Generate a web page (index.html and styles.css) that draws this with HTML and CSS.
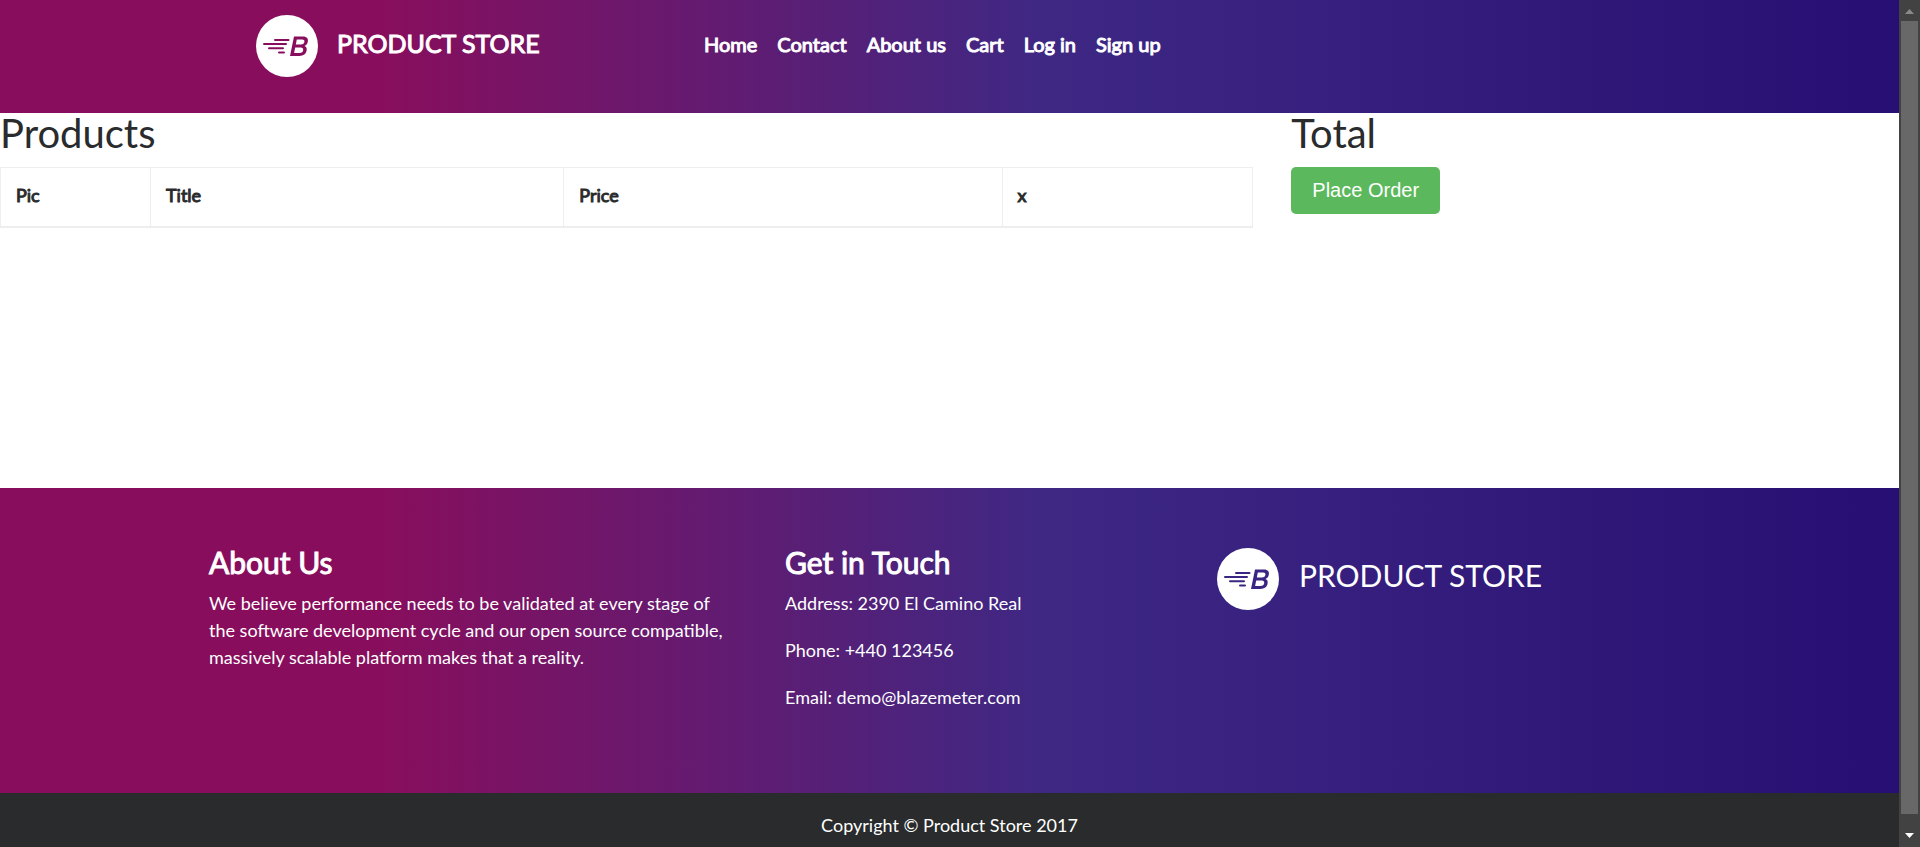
FILE: index.html
```html
<!DOCTYPE html>
<html lang="en">
<head>
<meta charset="utf-8">
<title>Product Store</title>
<link rel="stylesheet" href="styles.css">
</head>
<body>
<svg class="sprite" aria-hidden="true">
  <symbol id="logo" viewBox="0 0 62 62">
    <circle cx="31" cy="31" r="31" fill="#fff"/>
    <g fill="none" stroke="currentColor" stroke-width="2" stroke-linecap="round">
      <path d="M19 25H32.500M8 29H30M13 33.200H27M23 37.500H28"/>
    </g>
    <path fill="currentColor" fill-rule="evenodd" d="M38 21.500H47C51 21.500 52.500 23.800 51.800 26.800C51.400 29 50.200 30.400 48.500 31C50.500 31.800 51 33.500 50.600 35.600C50 39 47.400 41 43.500 41H34ZM40.800 24.500L39.800 29.500H44.800C47 29.500 48.200 28.500 48.400 26.800C48.600 25.300 47.800 24.500 46 24.500ZM39.200 32.400L38.100 38H43.600C45.700 38 46.900 37.100 47.200 35.300C47.500 33.400 46.600 32.400 44.700 32.400Z"/>
  </symbol>
</svg>
<header class="topbar">
  <a class="brand" href="#"><svg class="logo logo-top" aria-hidden="true"><use href="#logo"/></svg><span>PRODUCT STORE</span></a>
  <nav class="nav">
    <a href="#">Home</a><a href="#">Contact</a><a href="#">About us</a><a href="#">Cart</a><a href="#">Log in</a><a href="#">Sign up</a>
  </nav>
</header>
<main class="cart">
  <section>
    <h2>Products</h2>
    <table>
      <colgroup><col class="c-pic"><col class="c-title"><col class="c-price"><col></colgroup>
      <thead><tr><th>Pic</th><th>Title</th><th>Price</th><th>x</th></tr></thead>
    </table>
  </section>
  <section>
    <h2>Total</h2>
    <button type="button" class="order">Place Order</button>
  </section>
</main>
<footer>
  <div class="info">
    <section>
      <h4>About Us</h4>
      <p>We believe performance needs to be validated at every stage of the software development cycle and our open source compatible, massively scalable platform makes that a reality.</p>
    </section>
    <section>
      <h4>Get in Touch</h4>
      <p>Address: 2390 El Camino Real</p>
      <p>Phone: +440 123456</p>
      <p>Email: demo@blazemeter.com</p>
    </section>
    <section class="sign">
      <svg class="logo logo-foot" aria-hidden="true"><use href="#logo"/></svg><span>PRODUCT STORE</span>
    </section>
  </div>
  <p class="copy">Copyright © Product Store 2017</p>
</footer>
<div class="scrollbar" aria-hidden="true">
  <svg viewBox="0 0 21 21"><path fill="#8a8a8a" d="M6 14L10.500 9L15 14Z"/></svg>
  <div class="thumb"></div>
  <svg class="down" viewBox="0 0 21 33"><path fill="#fff" d="M6 19L10.500 24L15 19Z"/></svg>
</div>
</body>
</html>
```
FILE: styles.css
```css
* { box-sizing: border-box; }
body {
  margin: 0;
  padding-right: 21px;
  background: #fff;
  color: #292b2c;
  font: 18px/27px Lato, sans-serif;
}
a { color: inherit; text-decoration: none; }
h2, h4, p { margin: 0; }
h2, th, h4, .brand, .nav { font-weight: 400; }
.sprite { position: absolute; width: 0; height: 0; }
.logo { width: 62px; height: 62px; flex: none; }
.logo-top { color: #880e5d; }
.logo-foot { color: #3a2583; }

.topbar, .info {
  background: linear-gradient(90deg, #880e5d 0%, #880e5d 20%, #3e2884 55%, #280f73 98%);
  color: #fff;
}
.topbar {
  display: grid;
  grid-template-columns: 448px 1fr;
  align-items: start;
  min-height: 113px;
  padding: 15px 0 0 256px;
}
.brand { display: flex; gap: 19px; font-size: 25px; line-height: 56px; }
.nav { display: flex; gap: 20px; font-size: 20px; line-height: 58px; }
.brand, .nav, h4, th { -webkit-text-stroke: 1px currentColor; }

.cart {
  display: grid;
  grid-template-columns: 66% 1fr;
  column-gap: 38px;
  min-height: 375px;
}
h2 { font-size: 40px; line-height: 40px; margin-bottom: 14px; }
table { width: 100%; table-layout: fixed; border-collapse: collapse; }
.c-pic { width: 150px; }
.c-title { width: 33%; }
.c-price { width: 35%; }
th {
  padding: 14px 15px 17px;
  border: 1px solid #eceeef;
  border-bottom-width: 2px;
  text-align: left;
}
.order {
  padding: 12px 21px;
  border: 0;
  border-radius: 5px;
  background: #5cb85c;
  color: #fff;
  font: 20px/23px "Liberation Sans", Arial, sans-serif;
}

.info {
  display: grid;
  grid-template-columns: 530px 386px 1fr;
  column-gap: 46px;
  padding: 58px 208px 0 209px;
  min-height: 305px;
}
h4 { font-size: 30px; line-height: 32px; margin-bottom: 12px; }
.info p { margin-bottom: 20px; }
.sign { display: flex; gap: 20px; padding-top: 2px; font-size: 30px; line-height: 54px; }
.copy {
  padding: 19px 0 8px;
  background: #292b2c;
  color: #fff;
  text-align: center;
}

.scrollbar {
  position: fixed;
  top: 0;
  right: 0;
  bottom: 0;
  width: 21px;
  display: flex;
  flex-direction: column;
  background: #424242;
}
.scrollbar svg { width: 21px; height: 21px; flex: none; }
.scrollbar .down { height: 33px; }
.thumb { flex: 1; margin: 0 2px; background: #686868; }
```
